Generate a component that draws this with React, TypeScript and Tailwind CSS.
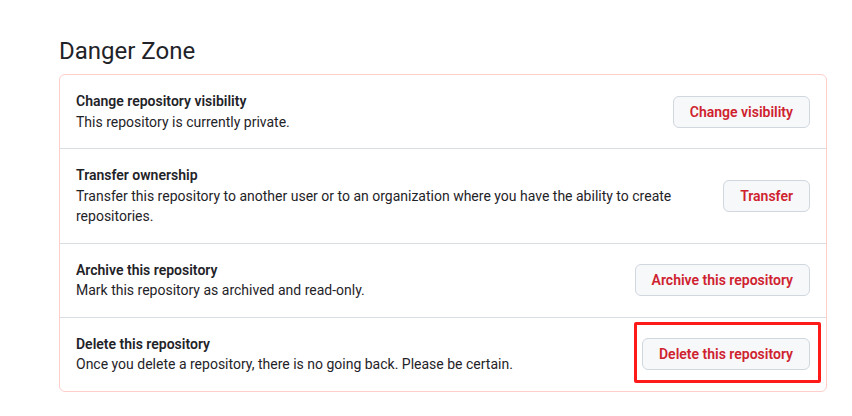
import React from "react";

type Row = { title: string; desc: string; action: string; highlight?: boolean };

const rows: Row[] = [
  { title: "Change repository visibility", desc: "This repository is currently private.", action: "Change visibility" },
  {
    title: "Transfer ownership",
    desc: "Transfer this repository to another user or to an organization where you have the ability to create repositories.",
    action: "Transfer",
  },
  { title: "Archive this repository", desc: "Mark this repository as archived and read-only.", action: "Archive this repository" },
  {
    title: "Delete this repository",
    desc: "Once you delete a repository, there is no going back. Please be certain.",
    action: "Delete this repository",
    highlight: true,
  },
];

function DangerButton({ label }: { label: string }) {
  return (
    <button
      type="button"
      className="h-8 px-4 rounded-md border border-[#d0d7de] bg-[#f6f8fa] text-[#cf222e] text-sm font-semibold leading-5 whitespace-nowrap"
    >
      {label}
    </button>
  );
}

export default function App() {
  return (
    <div className="min-h-[416px] bg-white font-['Roboto',sans-serif] text-[#1f2328]">
      <div className="ml-[59px] w-[768px] pt-[35px]">
        <h2 className="text-2xl leading-8 font-normal mb-[7px]">Danger Zone</h2>
        <div className="border border-[#ffcecb] rounded-md">
          {rows.map((r, i) => (
            <div
              key={r.title}
              className={`flex items-center gap-4 px-4 py-4 ${i > 0 ? "border-t border-[#d8dee4]" : ""}`}
            >
              <div className="flex-1 min-w-0 text-sm leading-[20.5px]">
                <div className="font-semibold">{r.title}</div>
                <div className="pr-2">{r.desc}</div>
              </div>
              {r.highlight ? (
                <div className="relative">
                  <DangerButton label={r.action} />
                  <div className="absolute -left-[8px] -right-[11px] -top-[16px] -bottom-[13px] border-[3px] border-[#ff1a1a] rounded-[2px] pointer-events-none" />
                </div>
              ) : (
                <DangerButton label={r.action} />
              )}
            </div>
          ))}
        </div>
      </div>
    </div>
  );
}
